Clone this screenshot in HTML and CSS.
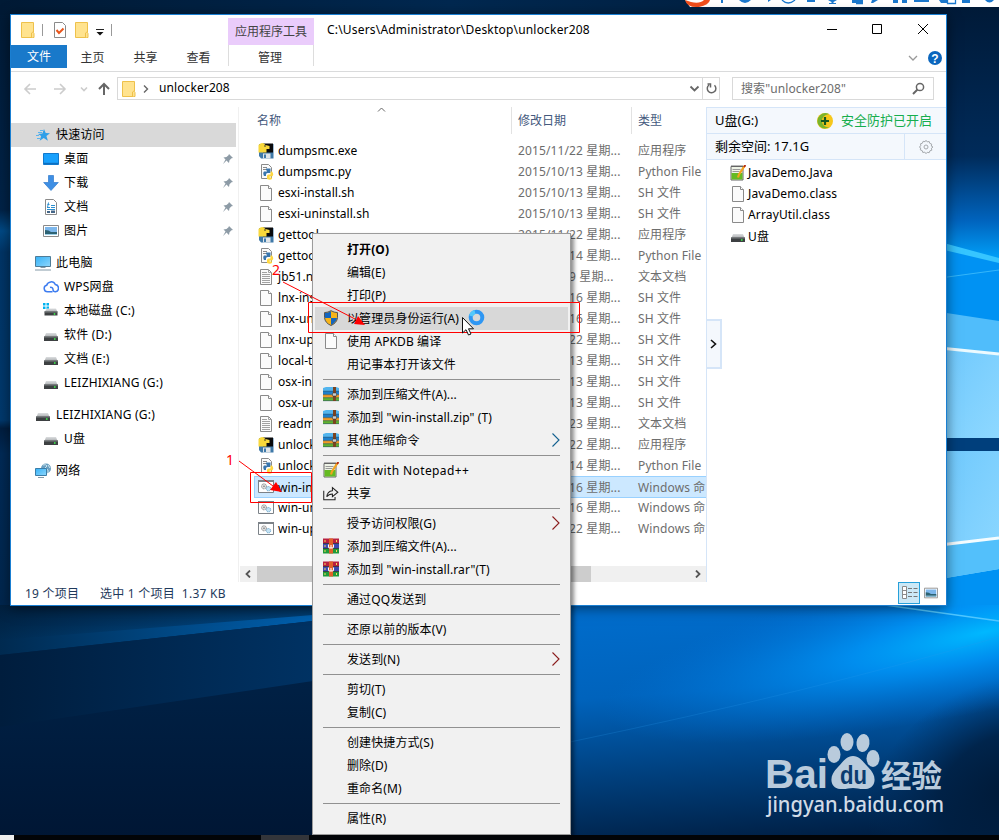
FILE: index.html
```html
<!DOCTYPE html>
<html lang="zh-CN">
<head>
    <meta charset="UTF-8">
    <meta name="viewport" content="width=device-width, initial-scale=1.0">
    <title>unlocker208</title>
    <link rel="stylesheet" href="styles.css">
</head>
<body>

    <!-- icons -->
    <svg class="defs" width="0" height="0">
        <defs>
            <linearGradient id="g-screen" x1="0" y1="0" x2="1" y2="1"><stop offset="0" stop-color="#35b2f8"/><stop offset="1" stop-color="#8ed6fb"/></linearGradient>
            <linearGradient id="g-drive" x1="0" y1="0" x2="0" y2="1"><stop offset="0" stop-color="#dcdee0"/><stop offset="1" stop-color="#a9acae"/></linearGradient>
        </defs>
        <symbol id="folder" viewBox="0 0 16 16"><path d="M1.500.5h12v10l.5 1v4h-1.500H1.500z" fill="#ffe38f" stroke="#eec14b"/><path d="M11.500 15v-4l2-1.500" fill="none" stroke="#eec14b"/></symbol>
        <symbol id="file" viewBox="0 0 16 16"><path d="M2.500.5h8l3 3v12h-11z" fill="#fbfbfb" stroke="#8a8a8a"/><path d="M10.500.5v3h3" fill="#fff" stroke="#8a8a8a"/></symbol>
        <symbol id="txt" viewBox="0 0 16 16"><path d="M2.500.5h8l3 3v12h-11z" fill="#fbfbfb" stroke="#8a8a8a"/><path d="M10.500.5v3h3M4 3.500h5M4 5.500h8M4 7.500h8M4 9.500h8M4 11.500h8M4 13.500h8" fill="none" stroke="#a2a2a2"/></symbol>
        <symbol id="exe" viewBox="0 0 16 16"><path d="M1 1h14.500v14.500H3L1 13z" fill="#3f79a8"/><path d="M5 .5h10v9H5z" fill="#0a0a0c"/><path d="M.5 2q4-4 7 0l4 1v3H8.500v3.500H.5z" fill="#f9d83a"/><circle cx="7" cy="3" r=".8" fill="#222"/><path d="M5 10.500h7.500v5H5z" fill="#dfe4e8"/><path d="M6 11.500h2v3.500H6z" fill="#3f79a8"/></symbol>
        <symbol id="py" viewBox="0 0 16 16"><path d="M3.500.5h7l3 3v11h-10z" fill="#fbfbfb" stroke="#8a8a8a"/><path d="M5 3.500h4M5 5.500h3" stroke="#888"/><path d="M8 4.500h4.500V9H9.500q-1.500 0-1.500 1.500V12H6q-1.500-3 0-4.500h3V6.500H8z" fill="#3a76ad"/><path d="M12.500 7.500H14q2.500 3 0 5h-2.500v1H14V15q-2 1.500-5 0v-3q0-1.500 1.500-1.500h2z" fill="#ffd740"/></symbol>
        <symbol id="cmd" viewBox="0 0 16 16"><path d="M.5 1.500h15v12H.5z" fill="#fff" stroke="#7c8288"/><path d="M0 1h16v2H0z" fill="#7c8288"/><circle cx="6" cy="7.300" r="2.500" fill="#ddd" stroke="#888" stroke-dasharray="1.200 .6"/><circle cx="6" cy="7.300" r=".8" fill="#777"/><circle cx="10.500" cy="9.700" r="2.200" fill="#c4e2f3" stroke="#6ba6cc" stroke-dasharray="1.200 .6"/></symbol>
        <symbol id="drive" viewBox="0 0 16 16"><path d="M3 6h10l1.500 4h-13z" fill="url(#g-drive)"/><path d="M1 9.500h14V14H1z" fill="#3d4042"/><path d="M1 9.500h14v1H1z" fill="#797c7e"/><circle cx="11.800" cy="12" r=".9" fill="#3ce24a"/></symbol>
        <symbol id="sysdrive" viewBox="0 0 16 16"><path d="M0 0h2.500v2.500H0zM3.500 0H6v2.500H3.500zM0 3.500h2.500V6H0zM3.500 3.500H6V6H3.500z" fill="#00b2f0"/><path d="M4 5.500h9l1.500 3.500h-13z" fill="url(#g-drive)"/><path d="M1.500 8.500h13v4h-13z" fill="#3d4042"/><path d="M1.500 8.500h13v1h-13z" fill="#797c7e"/><circle cx="11.500" cy="11" r=".9" fill="#3ce24a"/></symbol>
        <symbol id="star" viewBox="0 0 16 16"><path d="M9 2l1.700 4 4.300.2-3.600 2.800 1.500 4.700-4.200-2.600-4 2.700 1.400-4.700L3 7l4.400-.6z" fill="#2f9fe8"/><path d="M5 3.500h3M3 5.500h4M1 8.500h3M2 11.500h3" stroke="#5bb4ee"/></symbol>
        <symbol id="desk" viewBox="0 0 16 16"><path d="M.5 2.500h15v11H.5z" fill="#19a1fd" stroke="#1279cc"/><path d="M1 11.800h14V13H1z" fill="#0d6fc0"/></symbol>
        <symbol id="down" viewBox="0 0 16 16"><path d="M5.500.5h5v7h4.800L8 15.500.7 7.500h4.800z" fill="#3e8fe4" stroke="#2f7acd" stroke-width=".7"/></symbol>
        <symbol id="doc" viewBox="0 0 16 16"><path d="M2.500.5h8l3 3v12h-11z" fill="#fff" stroke="#8a8a8a"/><path d="M4.500 5.500h2M4 8.500h3M5.500 3.500l-1 5M8 6.500h4M8 8.500h4M4 10.500h8" stroke="#2b8fd0"/><path d="M4 12h3v2H4zM8 11.500h4V14H8z" fill="#468"/></symbol>
        <symbol id="pic" viewBox="0 0 16 16"><path d="M.5 2.500h15v11H.5z" fill="#fff" stroke="#8a8a8a"/><path d="M2 4h12v8H2z" fill="#7db7ec"/><path d="M2 7q4 0 6 2 4 0 6 0v3H2z" fill="#2d6273"/><path d="M2 11h12v1H2z" fill="#9bd0e8"/></symbol>
        <symbol id="pc" viewBox="0 0 16 16"><path d="M.5 1.500h15v10H.5z" fill="url(#g-screen)" stroke="#4f7c97"/><path d="M5.500 12.500h5M0 15h16" stroke="#8399a7"/></symbol>
        <symbol id="cloud" viewBox="0 0 16 16"><path d="M9.500 12.800H4.500a3.300 3.300 0 0 1-.8-6.500 4.600 4.600 0 0 1 8.600-.8A3.700 3.700 0 0 1 12.500 12.800q-2.500 0-2.500-2.300a2.200 2.200 0 0 0-3-2" fill="none" stroke="#3d7cf0" stroke-width="1.500"/></symbol>
        <symbol id="net" viewBox="0 0 16 16"><circle cx="11" cy="5.500" r="5" fill="#6a9fc0"/><path d="M8 2q3-1 4 1l-2 2 3 2v3M13 2l2 3" stroke="#cde5ef" fill="none"/><path d="M.5 5.500h11v7H.5z" fill="url(#g-screen)" stroke="#3a7da8"/><path d="M3 14.500h6" stroke="#8399a7"/></symbol>
        <symbol id="pin" viewBox="0 0 12 12"><path d="M7 1l4 4-1.500.3-2 2L7 10 4.500 7.500 1 11l2.500-4.500L1.500 4.500l3-.5 2-1.700z" fill="#8d9ba6"/></symbol>
        <symbol id="npp" viewBox="0 0 16 16"><path d="M1 1.500h12v13.500H1z" fill="#eef3e6" stroke="#666"/><path d="M1.500 8h11v6.500h-11z" fill="#65bb22"/><path d="M2.500 4.500h8M2.500 6.500h7" stroke="#999"/><path d="M1.500.7h11" stroke="#555" stroke-dasharray="1 1"/><path d="M14.500 1L9 9.500 8 12.500" stroke="#f3a31d" stroke-width="2.200" fill="none"/><path d="M15.500 0L14 2" stroke="#b42a10" stroke-width="2"/></symbol>
        <symbol id="shield" viewBox="0 0 16 16"><path d="M8 .7Q5 2.500 1.500 2.600v5Q2 13 8 15.500 14 13 14.500 7.600v-5Q11 2.500 8 .7z" fill="#f8b418"/><path d="M8 1.200Q5 3 2 3v5h6zM8 8h6q-.8 4.500-6 7z" fill="#1565bd"/><path d="M8 .7Q5 2.500 1.500 2.600v5Q2 13 8 15.500 14 13 14.500 7.600v-5Q11 2.500 8 .7z" fill="none" stroke="#555"/></symbol>
        <symbol id="zip" viewBox="0 0 16 16"><path d="M0 2l3-1h10l3 1v4H0z" fill="#53b5ee"/><path d="M0 5h16v4H0z" fill="#1d7fcb"/><path d="M0 8.500h16V12H0z" fill="#f39a24"/><path d="M0 11.500h16V15H0z" fill="#62b32d"/><path d="M0 5.200h16M0 8.700h16M0 11.800h16M0 14.700h16" stroke="#2c5570" stroke-width=".6"/><path d="M10 1h3v14h-3z" fill="#7a4320"/><path d="M9.500 7h4v3h-4z" fill="#c8cdd0" stroke="#333" stroke-width=".5"/></symbol>
        <symbol id="rar" viewBox="0 0 16 16"><path d="M0 .5h16v5H0z" fill="#b8203f"/><path d="M0 5.500h16v5H0z" fill="#3b48b0"/><path d="M0 10.500h16v5H0z" fill="#1f9a3a"/><path d="M0 5.500h16M0 10.500h16" stroke="#222" stroke-width=".7"/><path d="M6 .5h4v15H6z" fill="#e0602a"/><path d="M5.500 6.500v2q0 1.500 1.200 1.500h2.600q1.200 0 1.200-1.500v-2M8 7v3" stroke="#fff" stroke-width="1.100" fill="none"/><path d="M2 2v2M2 7v2M2 12v2M13.500 2v2M13.500 12v2" stroke="#f6dc57"/></symbol>
        <symbol id="share" viewBox="0 0 17 16"><path d="M.8 5.500v9.700h12v-3M4 12Q4.500 6 10 5.500v-3.300l5.800 5-5.800 4.700V9Q6 9 4 12z" fill="none" stroke="#222" stroke-width="1.100"/></symbol>
        <symbol id="more" viewBox="0 0 8 14"><path d="M.5.500L7 7 .5 13.500" fill="none" stroke="currentColor" stroke-width="1.100"/></symbol>
    </svg>

    <div class="desktop">
        <svg class="wallpaper" viewBox="0 0 999 840" width="999" height="840">
            <defs>
                <linearGradient id="w-left" x1="0" y1="0" x2="0" y2="1">
                    <stop offset="0" stop-color="#001a35"/><stop offset=".25" stop-color="#002348"/><stop offset=".275" stop-color="#004a86"/><stop offset=".3" stop-color="#003567"/>
                    <stop offset=".5" stop-color="#00396d"/><stop offset=".51" stop-color="#001e40"/><stop offset=".54" stop-color="#002a56"/><stop offset=".7" stop-color="#00274f"/><stop offset="1" stop-color="#001634"/>
                </linearGradient>
                <linearGradient id="w-top" x1="0" y1="0" x2="1" y2="0"><stop offset="0" stop-color="#001a35"/><stop offset=".45" stop-color="#002850"/><stop offset="1" stop-color="#001a36"/></linearGradient>
                <linearGradient id="w-beam" x1="0" y1="0" x2="1" y2="0"><stop offset="0" stop-color="#002a50"/><stop offset="1" stop-color="#0060ae"/></linearGradient>
                <linearGradient id="w-fade" x1="0" y1="0" x2="0" y2="1"><stop offset="0" stop-color="#001c38" stop-opacity=".75"/><stop offset="1" stop-color="#001c38" stop-opacity="0"/></linearGradient>
                <linearGradient id="w-low" x1="0" y1="0" x2="1" y2="0"><stop offset="0" stop-color="#001d3d"/><stop offset="1" stop-color="#003263"/></linearGradient>
                <linearGradient id="w-right" x1="0" y1="0" x2="0" y2="1"><stop offset="0" stop-color="#001936"/><stop offset=".6" stop-color="#002b5a"/><stop offset=".85" stop-color="#0064be"/><stop offset="1" stop-color="#00a2fb"/></linearGradient>
                <linearGradient id="w-cyan" x1="0" y1="0" x2="1" y2="1"><stop offset="0" stop-color="#6ec8fd"/><stop offset="1" stop-color="#8ed8ff"/></linearGradient>
                <linearGradient id="w-main" x1=".4" y1="0" x2=".52" y2="1"><stop offset="0" stop-color="#006ccb"/><stop offset=".35" stop-color="#0063bc"/><stop offset=".68" stop-color="#00407e"/><stop offset="1" stop-color="#001f44"/></linearGradient>
                <radialGradient id="w-dark" gradientUnits="userSpaceOnUse" cx="0" cy="0" r="1" gradientTransform="translate(1010 790) rotate(-25) scale(150 110)"><stop offset="0" stop-color="#001a38"/><stop offset=".5" stop-color="#001f42" stop-opacity=".85"/><stop offset="1" stop-color="#002a58" stop-opacity="0"/></radialGradient>
                <radialGradient id="w-glow" gradientUnits="userSpaceOnUse" cx="0" cy="0" r="1" gradientTransform="translate(985 632) rotate(-12) scale(390 78)"><stop offset="0" stop-color="#00b8ff"/><stop offset=".35" stop-color="#0094f6" stop-opacity=".85"/><stop offset="1" stop-color="#0070d6" stop-opacity="0"/></radialGradient>
            </defs>
            <rect width="999" height="840" fill="url(#w-left)"/>
            <rect width="999" height="15" fill="url(#w-top)"/>
            <path d="M0 605h313v16L0 655z" fill="url(#w-beam)"/>
            <path d="M0 605h313v10L0 640z" fill="url(#w-fade)"/>
            <path d="M0 655l313-34v60L0 727z" fill="url(#w-low)"/>
            <rect x="570" y="605" width="429" height="235" fill="url(#w-main)"/>
            <rect x="780" y="640" width="219" height="200" fill="url(#w-dark)"/>
            <rect x="940" y="0" width="59" height="260" fill="url(#w-right)"/>
            <path d="M940 242l59 18v361l-59-8z" fill="#0092f3"/>
            <rect x="570" y="605" width="429" height="235" fill="url(#w-glow)"/>
            <path d="M570 742q240-50 429-105" fill="none" stroke="#2b9bec" stroke-opacity=".22"/>
            <path d="M940 242l59 16v5l-59-14z" fill="#36c5ff"/>
            <path d="M940 278l59-8" stroke="#35b6fa"/>
            <path d="M940 312l59 9v117h-59z" fill="#50bdfb"/>
            <path d="M940 349l59 6v83h-59z" fill="url(#w-cyan)"/>
            <path d="M940 348l59 6" stroke="#ecfaff" stroke-width="3"/>
            <path d="M940 438h59v13h-59z" fill="#003f7c"/>
            <path d="M940 451h59v118l-59 10z" fill="url(#w-cyan)"/>
            <path d="M940 545l59-7v31l-59 10z" fill="#53c0fb"/>
            <path d="M940 545l59-7" stroke="#f4fcff" stroke-width="3"/>
            <path d="M885 605l114 16" stroke="#4fc6ff" stroke-width="1.500"/>
        </svg>

        <!-- input method bar, cut by the top edge -->
        <svg class="ime" viewBox="0 0 314 8" width="314" height="8">
            <path d="M0 0h314v7H5z" fill="#fff"/>
            <path d="M0 0q2 8 14 7 10-2 11-7h-6q-4 4-13 2z" fill="#f04e1c"/>
            <g fill="#1b78cd">
                <path d="M36 0h2v3h-2zM54 0h12q-6 6-12 0zM83 0h3l-3 2zM122 0h8v2h-8zM143 0h9l-3.500 2v1h2.500v1h-7V3h2.500V2zM167 0h11v3h-11zM187 0h6l-5 3h-2zM208 0h5v3h-5zM217 0h5v3h-5zM229 0h15v2h-15zM254 0h8v3h-6zM277 0h8v3h-8zM300 0h9q-4.500 5-9 0z"/>
            </g>
            <path d="M97 0q6 6 13 0M171 3.500h7M262.500 0v3.500h8V0" fill="none" stroke="#1b78cd" stroke-width="1.300"/>
        </svg>

        <div class="window">
            <div class="titlebar">
                <div class="quick">
                    <svg class="icon"><use href="#folder"/></svg>
                    <span class="bar"></span>
                    <svg class="icon check" viewBox="0 0 16 16"><path d="M2.500.5h8l3 3v12h-11z" fill="#fff" stroke="#8a8a8a"/><path d="M4.500 8l2.500 3L11.500 6.500" fill="none" stroke="#e8561c" stroke-width="2"/></svg>
                    <svg class="icon"><use href="#folder"/></svg>
                    <svg class="drop" viewBox="0 0 8 7"><path d="M0 .5h8" stroke="#222"/><path d="M.5 3h7L4 6.500z" fill="#111"/></svg>
                    <span class="bar"></span>
                </div>
                <div class="tool-tab">应用程序工具</div>
                <div class="path">C:\Users\Administrator\Desktop\unlocker208</div>
                <svg class="controls" viewBox="0 0 110 16" width="110" height="16"><path d="M5 8.500h10M50.500 3.500h9v9h-9zM96 3l10 10M106 3L96 13" fill="none" stroke="#000"/></svg>
            </div>

            <div class="tabs">
                <div class="tab file-tab">文件</div>
                <div class="tab">主页</div>
                <div class="tab">共享</div>
                <div class="tab">查看</div>
                <div class="tab manage">管理</div>
                <svg class="help" viewBox="0 0 36 14" width="36" height="14"><path d="M1 5l4 4 4-4" fill="none" stroke="#999" stroke-width="1.300"/><circle cx="27" cy="7" r="7" fill="#0b66bd"/><text x="27" y="11.500" text-anchor="middle">?</text></svg>
            </div>

            <div class="address-row">
                <svg class="arrows" viewBox="0 0 90 16" width="90" height="16">
                    <g fill="none" stroke="#ccc" stroke-width="1.600"><path d="M14 8H3M8 3L3 8l5 5M32 8h11M38 3l5 5-5 5"/><path d="M59 6.500l3 3 3-3"/></g>
                    <path d="M82 14V3M77 8l5-5 5 5" fill="none" stroke="#666" stroke-width="2"/>
                </svg>
                <div class="address">
                    <svg class="icon"><use href="#folder"/></svg>
                    <svg class="crumb" viewBox="0 0 6 8"><path d="M1 .5L4.500 4 1 7.500" fill="none" stroke="#666" stroke-width="1.400"/></svg>
                    <span>unlocker208</span>
                    <svg class="addr-btns" viewBox="0 0 30 21" width="30" height="21"><path d="M1.500 8.500l4 4 4-4" fill="none" stroke="#666" stroke-width="1.800"/><path d="M13.500 0v21" stroke="#d9d9d9"/><path d="M25.500 7.300a4.300 4.300 0 1 1-5.500-.3M18.500 6h3v3.500" fill="none" stroke="#666" stroke-width="1.500"/></svg>
                </div>
                <div class="search">
                    <span>搜索"unlocker208"</span>
                    <svg viewBox="0 0 13 13" width="13" height="13"><circle cx="8" cy="5" r="3.600" fill="none" stroke="#666" stroke-width="1.500"/><path d="M5.500 7.500L1 12" stroke="#666" stroke-width="2"/></svg>
                </div>
            </div>

            <div class="content">
                <div class="nav">
                    <div class="nav-item top active"><svg class="icon"><use href="#star"/></svg>快速访问</div>
                    <div class="nav-item"><svg class="icon"><use href="#desk"/></svg>桌面<svg class="pin"><use href="#pin"/></svg></div>
                    <div class="nav-item"><svg class="icon"><use href="#down"/></svg>下载<svg class="pin"><use href="#pin"/></svg></div>
                    <div class="nav-item"><svg class="icon"><use href="#doc"/></svg>文档<svg class="pin"><use href="#pin"/></svg></div>
                    <div class="nav-item"><svg class="icon"><use href="#pic"/></svg>图片<svg class="pin"><use href="#pin"/></svg></div>
                    <div class="nav-item top group"><svg class="icon"><use href="#pc"/></svg>此电脑</div>
                    <div class="nav-item"><svg class="icon"><use href="#cloud"/></svg>WPS网盘</div>
                    <div class="nav-item"><svg class="icon"><use href="#sysdrive"/></svg>本地磁盘 (C:)</div>
                    <div class="nav-item"><svg class="icon"><use href="#drive"/></svg>软件 (D:)</div>
                    <div class="nav-item"><svg class="icon"><use href="#drive"/></svg>文档 (E:)</div>
                    <div class="nav-item"><svg class="icon"><use href="#drive"/></svg>LEIZHIXIANG (G:)</div>
                    <div class="nav-item top group"><svg class="icon"><use href="#drive"/></svg>LEIZHIXIANG (G:)</div>
                    <div class="nav-item"><svg class="icon"><use href="#drive"/></svg>U盘</div>
                    <div class="nav-item top group"><svg class="icon"><use href="#net"/></svg>网络</div>
                </div>

                <div class="files">
                    <div class="files-head">
                        <span class="col-name">名称<svg class="sort" viewBox="0 0 8 5"><path d="M.5 4.500L4 1l3.500 3.500" fill="none" stroke="#666"/></svg></span>
                        <span class="col-date">修改日期</span>
                        <span class="col-type">类型</span>
                    </div>
                    <div class="file"><svg class="icon"><use href="#exe"/></svg><span class="name">dumpsmc.exe</span><span class="date">2015/11/22 星期...</span><span class="type">应用程序</span></div>
                    <div class="file"><svg class="icon"><use href="#py"/></svg><span class="name">dumpsmc.py</span><span class="date">2015/10/13 星期...</span><span class="type">Python File</span></div>
                    <div class="file"><svg class="icon"><use href="#file"/></svg><span class="name">esxi-install.sh</span><span class="date">2015/10/13 星期...</span><span class="type">SH 文件</span></div>
                    <div class="file"><svg class="icon"><use href="#file"/></svg><span class="name">esxi-uninstall.sh</span><span class="date">2015/10/13 星期...</span><span class="type">SH 文件</span></div>
                    <div class="file"><svg class="icon"><use href="#exe"/></svg><span class="name">gettool</span><span class="date">2015/11/22 星期...</span><span class="type">应用程序</span></div>
                    <div class="file"><svg class="icon"><use href="#py"/></svg><span class="name">gettoo</span><span class="date">2015/10/14 星期...</span><span class="type">Python File</span></div>
                    <div class="file"><svg class="icon"><use href="#txt"/></svg><span class="name">jb51.n</span><span class="date">2015/10/9 星期...</span><span class="type">文本文档</span></div>
                    <div class="file"><svg class="icon"><use href="#file"/></svg><span class="name">lnx-ins</span><span class="date">2015/10/16 星期...</span><span class="type">SH 文件</span></div>
                    <div class="file"><svg class="icon"><use href="#file"/></svg><span class="name">lnx-un</span><span class="date">2015/10/16 星期...</span><span class="type">SH 文件</span></div>
                    <div class="file"><svg class="icon"><use href="#file"/></svg><span class="name">lnx-up</span><span class="date">2015/11/22 星期...</span><span class="type">SH 文件</span></div>
                    <div class="file"><svg class="icon"><use href="#file"/></svg><span class="name">local-t</span><span class="date">2015/10/13 星期...</span><span class="type">SH 文件</span></div>
                    <div class="file"><svg class="icon"><use href="#file"/></svg><span class="name">osx-in</span><span class="date">2015/10/13 星期...</span><span class="type">SH 文件</span></div>
                    <div class="file"><svg class="icon"><use href="#file"/></svg><span class="name">osx-un</span><span class="date">2015/10/13 星期...</span><span class="type">SH 文件</span></div>
                    <div class="file"><svg class="icon"><use href="#txt"/></svg><span class="name">readm</span><span class="date">2015/11/23 星期...</span><span class="type">文本文档</span></div>
                    <div class="file"><svg class="icon"><use href="#exe"/></svg><span class="name">unlock</span><span class="date">2015/11/22 星期...</span><span class="type">应用程序</span></div>
                    <div class="file"><svg class="icon"><use href="#py"/></svg><span class="name">unlock</span><span class="date">2015/10/14 星期...</span><span class="type">Python File</span></div>
                    <div class="file selected"><svg class="icon"><use href="#cmd"/></svg><span class="name">win-in</span><span class="date">2015/10/16 星期...</span><span class="type">Windows 命</span></div>
                    <div class="file"><svg class="icon"><use href="#cmd"/></svg><span class="name">win-un</span><span class="date">2015/10/16 星期...</span><span class="type">Windows 命</span></div>
                    <div class="file"><svg class="icon"><use href="#cmd"/></svg><span class="name">win-up</span><span class="date">2015/11/22 星期...</span><span class="type">Windows 命</span></div>
                    <div class="scroll">
                        <svg viewBox="0 0 6 8"><path d="M5 .5L1.500 4 5 7.500" fill="none" stroke="#555" stroke-width="1.800"/></svg>
                        <div class="thumb"></div>
                        <svg viewBox="0 0 6 8"><path d="M1 .5L4.500 4 1 7.500" fill="none" stroke="#555" stroke-width="1.800"/></svg>
                    </div>
                </div>

                <div class="usb">
                    <div class="usb-row">
                        <span>U盘(G:)</span>
                        <svg class="guard" viewBox="0 0 16 16"><circle cx="8" cy="8" r="8" fill="#f6c71c"/><path d="M1 11A8 8 0 0 1 12 1Q4 3 5 9t8 5Q5 18 1 11z" fill="#4fae32" opacity=".75"/><path d="M8 4v8M4 8h8" stroke="#14591e" stroke-width="2.200"/></svg>
                        <span class="safe">安全防护已开启</span>
                    </div>
                    <div class="usb-row">
                        <span>剩余空间: 17.1G</span>
                        <div class="gear"><svg viewBox="0 0 16 16" width="16" height="16"><path d="M8 1.300l1.200 1.600 2-.4.6 1.900 1.900.7-.4 2L15 8l-1.600 1.200.4 2-1.900.6-.7 1.900-2-.4L8 14.700l-1.200-1.600-2 .4-.6-1.900-1.900-.7.4-2L1.300 8l1.600-1.200-.4-2 1.900-.6.7-1.900 2 .4z" fill="none" stroke="#a5a9ad"/><circle cx="8" cy="8" r="2" fill="none" stroke="#a5a9ad"/></svg></div>
                    </div>
                    <div class="usb-list">
                        <div class="usb-file"><svg class="icon"><use href="#npp"/></svg>JavaDemo.Java</div>
                        <div class="usb-file"><svg class="icon"><use href="#file"/></svg>JavaDemo.class</div>
                        <div class="usb-file"><svg class="icon"><use href="#file"/></svg>ArrayUtil.class</div>
                        <div class="usb-file"><svg class="icon"><use href="#drive"/></svg>U盘</div>
                    </div>
                    <div class="collapse"><svg viewBox="0 0 7 10" width="7" height="10"><path d="M1 1l4.500 4L1 9" fill="none" stroke="#111" stroke-width="1.600"/></svg></div>
                </div>
            </div>

            <div class="status">
                <span class="count">19 个项目</span>
                <span class="picked">选中 1 个项目&nbsp; 1.37 KB</span>
                <div class="view on"><svg viewBox="0 0 18 14" width="18" height="14"><path d="M2.500.5h4v12h-4zM2.500 4.500h4M2.500 8.500h4" fill="#fff" stroke="#8a8a8a"/><path d="M8 2.500h4M8 6.500h4M8 10.500h4M13.500 2.500h4M13.500 6.500h4M13.500 10.500h4" stroke="#777"/></svg></div>
                <div class="view"><svg class="icon" viewBox="0 0 16 16"><use href="#pic"/></svg></div>
            </div>
        </div>

        <div class="menu">
            <div class="item bold">打开(O)</div>
            <div class="item">编辑(E)</div>
            <div class="item">打印(P)</div>
            <div class="item hover"><svg class="icon"><use href="#shield"/></svg>以管理员身份运行(A)</div>
            <div class="item"><svg class="icon"><use href="#file"/></svg>使用 APKDB 编译</div>
            <div class="item">用记事本打开该文件</div>
            <hr>
            <div class="item"><svg class="icon"><use href="#zip"/></svg>添加到压缩文件(A)...</div>
            <div class="item"><svg class="icon"><use href="#zip"/></svg>添加到 "win-install.zip" (T)</div>
            <div class="item"><svg class="icon"><use href="#zip"/></svg>其他压缩命令<svg class="more blue"><use href="#more"/></svg></div>
            <hr>
            <div class="item latin"><svg class="icon"><use href="#npp"/></svg>Edit with Notepad++</div>
            <div class="item"><svg class="icon"><use href="#share"/></svg>共享</div>
            <hr>
            <div class="item">授予访问权限(G)<svg class="more"><use href="#more"/></svg></div>
            <div class="item"><svg class="icon"><use href="#rar"/></svg>添加到压缩文件(A)...</div>
            <div class="item"><svg class="icon"><use href="#rar"/></svg>添加到 "win-install.rar"(T)</div>
            <hr>
            <div class="item">通过QQ发送到</div>
            <hr>
            <div class="item">还原以前的版本(V)</div>
            <hr>
            <div class="item">发送到(N)<svg class="more"><use href="#more"/></svg></div>
            <hr>
            <div class="item">剪切(T)</div>
            <div class="item">复制(C)</div>
            <hr>
            <div class="item">创建快捷方式(S)</div>
            <div class="item">删除(D)</div>
            <div class="item">重命名(M)</div>
            <hr>
            <div class="item">属性(R)</div>
        </div>

        <div class="taskbar"><span class="start"></span><span class="running"></span></div>

        <!-- step marks and the pointer -->
        <svg class="marks" viewBox="0 0 999 840" width="999" height="840">
            <g fill="none" stroke="#f00">
                <path d="M311.500 502.500h-61v-30h61zM308.500 302.500h271v30h-271zM239 461l34 25M283 282l72 37"/>
            </g>
            <path d="M282 492l-12-2 6-8zM365 325l-11-1 4-8z" fill="#f00"/>
            <text x="226" y="465">1</text>
            <text x="272" y="275">2</text>
            <circle cx="476.500" cy="317.500" r="5.800" fill="none" stroke="#2f97f3" stroke-width="4"/>
            <path d="M471 316a5.800 5.800 0 0 1 4-4" fill="none" stroke="#54c8fa" stroke-width="4"/>
            <path d="M462.500 317.500v15.500l3.500-3.300 2.500 5.300 2.500-1-2.500-5.200h5z" fill="#fff" stroke="#111"/>
        </svg>

        <svg class="watermark" viewBox="0 0 200 100" width="200" height="100">
            <text class="bai" x="15" y="58" textLength="63" lengthAdjust="spacingAndGlyphs">Bai</text>
            <ellipse cx="84" cy="24.500" rx="6.500" ry="8.500"/>
            <ellipse cx="97" cy="12" rx="6.500" ry="9"/>
            <ellipse cx="113" cy="13" rx="6.500" ry="9" transform="rotate(8 113 13)"/>
            <ellipse cx="123" cy="28.500" rx="6.500" ry="8.500"/>
            <path d="M103 26c7 0 10 6 15 11 10 9 8 21-2 22-6 .5-9-1-13-1s-7 1.500-13 1c-10-1-12-13-2-22 5-5 8-11 15-11z"/>
            <text class="du" x="90" y="54" textLength="27" lengthAdjust="spacingAndGlyphs">du</text>
            <text class="jy" x="131" y="57" textLength="61" lengthAdjust="spacingAndGlyphs">经验</text>
            <text class="url" x="17" y="82" textLength="177" lengthAdjust="spacingAndGlyphs">jingyan.baidu.com</text>
        </svg>
    </div>

</body>
</html>
```
FILE: styles.css
```css
* {
    box-sizing: border-box;
}

body {
    margin: 0;
    font-family: "Noto Sans", "Noto Sans CJK SC", sans-serif;
    font-size: 12px;
    color: #000;
    overflow: hidden;
}

.defs {
    position: absolute;
}

.icon {
    width: 16px;
    height: 16px;
    flex: none;
}

.desktop {
    position: relative;
    width: 999px;
    height: 840px;
    overflow: hidden;
    white-space: nowrap;
}

.wallpaper,
.marks {
    position: absolute;
    left: 0;
    top: 0;
}

.ime {
    position: absolute;
    left: 685px;
    top: 0;
}

/* window */
.window {
    position: absolute;
    left: 10px;
    top: 14px;
    width: 937px;
    height: 592px;
    display: flex;
    flex-direction: column;
    background: #fff;
    border: 1px solid #1a7fd2;
    box-shadow: 0 2px 12px rgba(0, 0, 0, 0.5);
}

.titlebar {
    display: flex;
    height: 30px;
}

.quick {
    display: flex;
    align-items: center;
    width: 217px;
    padding-left: 9px;
}

.quick .bar {
    width: 1px;
    height: 12px;
    margin: 0 9px 0 6px;
    background: #999;
}

.quick .check {
    margin-right: 6px;
}

.quick .drop {
    width: 8px;
    height: 7px;
    margin-left: 6px;
    margin-right: 1px;
    margin-top: 4px;
}

.tool-tab {
    width: 86px;
    height: 27px;
    margin-top: 3px;
    line-height: 27px;
    text-align: center;
    color: #444;
    background: #eaccfb;
}

.path {
    width: 501px;
    padding-left: 13px;
    line-height: 29px;
    letter-spacing: 0.19px;
}

.controls {
    margin-top: 6px;
    margin-left: 7px;
}

.tabs {
    display: flex;
    height: 27px;
    border-bottom: 1px solid #dadbdc;
}

.tab {
    width: 53px;
    line-height: 25px;
    text-align: center;
    color: #333;
}

.file-tab {
    width: 56px;
    height: 23px;
    margin-right: -1px;
    line-height: 23px;
    color: #fff;
    background: #1979ca;
}

.manage {
    width: 86px;
    height: 21px;
    margin-left: 3px;
    padding-right: 2px;
    border-left: 1px solid #ddd;
    border-right: 1px solid #ddd;
}

.help {
    margin: 6px 0 0 594px;
}

.help text {
    font: bold 12px "Liberation Sans", sans-serif;
    fill: #fff;
}

.address-row {
    display: flex;
    height: 35px;
    padding: 5px 0 0 11px;
}

.arrows {
    margin-top: 4px;
    overflow: visible;
}

.address {
    display: flex;
    align-items: center;
    width: 603px;
    height: 23px;
    margin-left: 5px;
    padding-left: 3px;
    border: 1px solid #d9d9d9;
    letter-spacing: 0.1px;
}

.address span,
.search span {
    padding-bottom: 2px;
}

.crumb {
    width: 6px;
    height: 8px;
    margin: 0 10px 0 6px;
}

.addr-btns {
    margin-left: auto;
}

.search {
    display: flex;
    align-items: center;
    justify-content: space-between;
    width: 202px;
    height: 23px;
    margin-left: 12px;
    padding: 0 8px;
    border: 1px solid #d9d9d9;
    color: #6d6d6d;
    letter-spacing: 0.1px;
}

.content {
    display: flex;
    height: 475px;
}

/* navigation pane */
.nav {
    width: 228px;
    padding-top: 16px;
    border-right: 1px solid #f0f0f0;
}

.nav-item {
    display: flex;
    align-items: center;
    width: 225px;
    height: 24px;
    padding-left: 32px;
    padding-bottom: 2px;
    letter-spacing: 0.2px;
}

.nav-item .icon {
    margin-top: 2px;
    margin-right: 5px;
}

.nav-item.top {
    padding-left: 24px;
}

.nav-item.group {
    margin-top: 8px;
}

.nav-item.active {
    background: #d9d9d9;
}

.pin {
    width: 12px;
    height: 12px;
    margin-top: 2px;
    margin-left: auto;
    margin-right: 2px;
}

/* file list */
.files {
    width: 467px;
    overflow: hidden;
}

.files-head {
    display: flex;
    height: 27px;
    margin-bottom: 6px;
    line-height: 27px;
    color: #44597d;
}

.col-name {
    position: relative;
    width: 272px;
    padding-left: 18px;
}

.sort {
    position: absolute;
    left: 138px;
    top: 0;
    width: 9px;
    height: 5px;
}

.col-date {
    width: 120px;
    padding-left: 6px;
    border-left: 1px solid #e2e2e2;
}

.col-type {
    padding-left: 6px;
    border-left: 1px solid #e2e2e2;
}

.file {
    display: flex;
    align-items: center;
    width: 470px;
    height: 21px;
    margin-left: 15px;
    padding-left: 4px;
}

.file .icon {
    margin-right: 4px;
}

.file.selected {
    height: 22px;
    margin-bottom: -1px;
    padding-left: 3px;
    background: #cce8ff;
    border: 1px solid #99d1ff;
}

.name {
    width: 240px;
    letter-spacing: 0.05px;
}

.date,
.type {
    padding-bottom: 1px;
    color: #6d6d6d;
    letter-spacing: 0.12px;
}

.date {
    width: 120px;
}

.scroll {
    display: flex;
    align-items: center;
    height: 16px;
    margin-top: 27px;
    margin-left: 1px;
    background: #f0f0f0;
}

.scroll svg {
    width: 6px;
    height: 8px;
    margin: 0 5px;
}

.thumb {
    width: 334px;
    height: 16px;
    margin-left: 1px;
    margin-right: auto;
    background: #cdcdcd;
}

/* usb pane */
.usb {
    position: relative;
    width: 240px;
    border: solid #d5e5f8;
    border-width: 1px 0 0 1px;
}

.usb-row {
    display: flex;
    align-items: center;
    height: 26px;
    padding-left: 8px;
    font-size: 13px;
    background: #f4f8fd;
    border-bottom: 1px solid #d5e5f8;
}

.usb-row span {
    padding-bottom: 2px;
}

.guard {
    width: 16px;
    height: 16px;
    margin: 0 8px 0 auto;
}

.safe {
    margin-right: 14px;
    color: #16ae4e;
}

.gear {
    display: flex;
    align-items: center;
    justify-content: center;
    width: 42px;
    height: 25px;
    margin-left: auto;
    border-left: 1px solid #d5e5f8;
}

.usb-list {
    padding-top: 2px;
}

.usb-file {
    display: flex;
    align-items: center;
    height: 21px;
    padding-left: 23px;
    letter-spacing: 0.15px;
}

.usb-file .icon {
    margin-right: 2px;
}

.collapse {
    position: absolute;
    left: 0;
    top: 211px;
    display: flex;
    align-items: center;
    justify-content: center;
    width: 15px;
    height: 50px;
    background: #f4f8fd;
    border: 2px solid #d5e5f8;
    border-left: 0;
}

.status {
    display: flex;
    height: 23px;
    line-height: 23px;
    color: #1e395b;
    letter-spacing: 0.25px;
}

.count {
    width: 79px;
    margin-right: 10px;
    padding-left: 14px;
}

.picked {
    margin-right: auto;
}

.view {
    display: flex;
    align-items: center;
    justify-content: center;
    width: 22px;
    height: 22px;
}

.view.on {
    background: #cbe8f6;
    border: 1px solid #26a0da;
}

.view:last-child {
    margin-right: 4px;
}

.view .icon {
    width: 14px;
    height: 14px;
}

/* context menu */
.menu {
    position: absolute;
    left: 312px;
    top: 233px;
    width: 259px;
    height: 602px;
    padding: 4px 2px;
    background: #f1f1f1;
    border: 1px solid #9b9b9b;
    box-shadow: 3px 3px 4px rgba(0, 0, 0, 0.45);
}

.menu hr {
    height: 1px;
    margin: 3px 8px;
    border: 0;
    background: #919191;
}

.item {
    position: relative;
    height: 23px;
    padding-left: 32px;
    line-height: 23px;
    letter-spacing: 0.1px;
}

.item .icon {
    position: absolute;
    left: 8px;
    top: 3px;
}

.item.bold {
    font-weight: bold;
}

.item.latin {
    letter-spacing: 0.4px;
}

.item.hover {
    background: #d8d8d8;
}

.more {
    position: absolute;
    right: 8px;
    top: 4px;
    width: 8px;
    height: 14px;
    color: #8a1c1c;
}

.more.blue {
    color: #12608f;
}

.taskbar {
    position: absolute;
    left: 0;
    bottom: 0;
    display: flex;
    width: 999px;
    height: 5px;
    background: #020407;
}

.start {
    width: 14px;
    background: #eee;
}

.running {
    width: 48px;
    margin-left: 247px;
    background: #33353a;
}

.marks text {
    font: 14px "Noto Sans", sans-serif;
    fill: #f00;
}

.watermark {
    position: absolute;
    left: 750px;
    top: 730px;
    fill: #b9cbdc;
}

.bai {
    font: bold 41px "Liberation Sans", sans-serif;
}

.du {
    font: bold 25px "Liberation Sans", sans-serif;
    fill: #0b3c70;
}

.jy {
    font: bold 31px "Noto Sans CJK SC", sans-serif;
}

.url {
    font: 500 21px "Noto Sans", sans-serif;
    fill: #d0dbe6;
}
```
